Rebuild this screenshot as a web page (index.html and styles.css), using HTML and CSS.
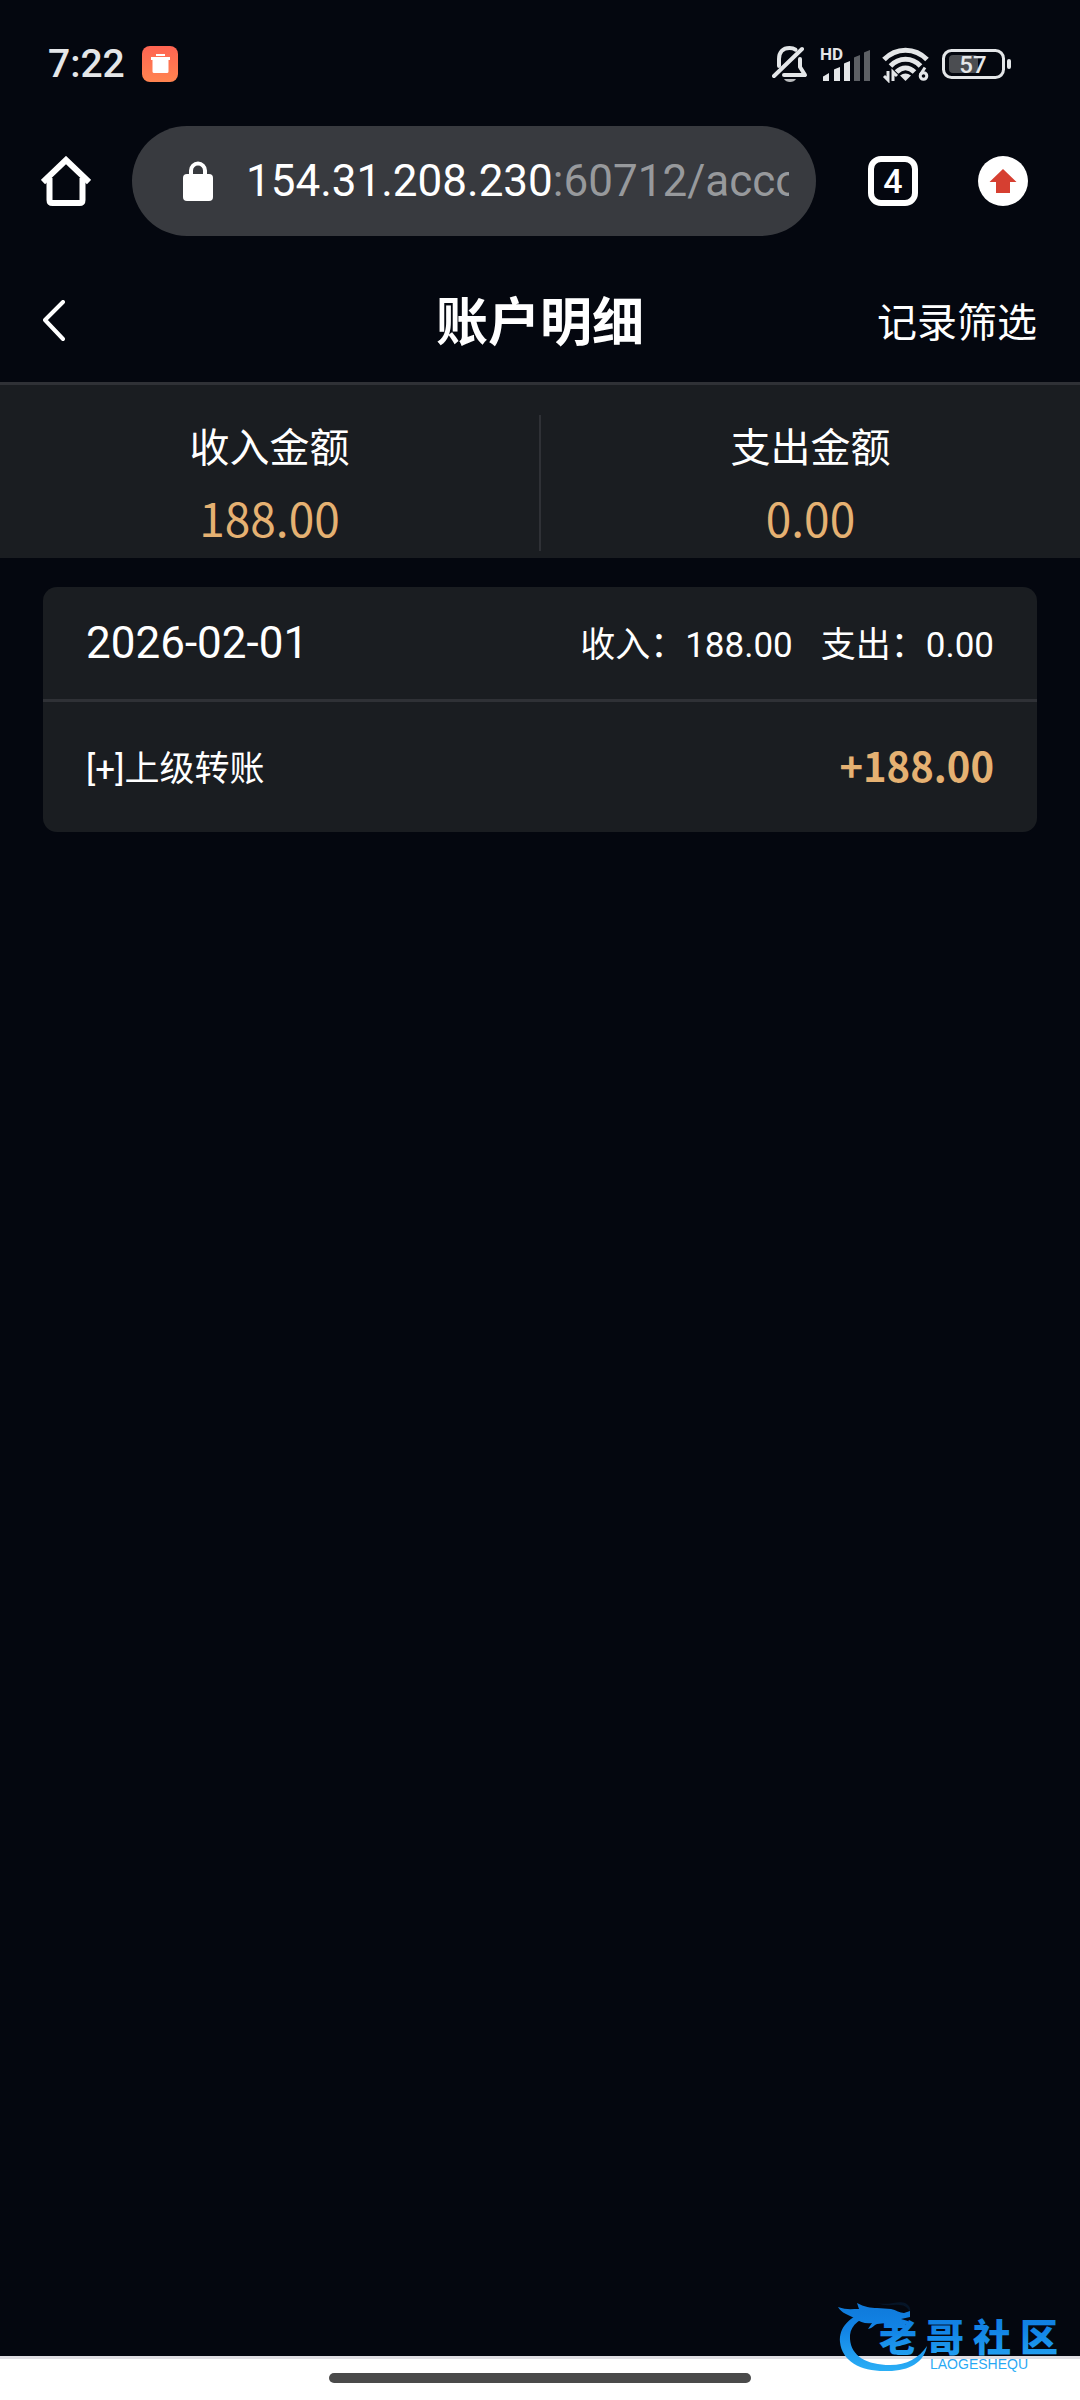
FILE: index.html
```
<!DOCTYPE html>
<html lang="zh-CN">
<head>
    <meta charset="UTF-8">
    <meta name="viewport" content="width=device-width, initial-scale=1">
    <title>账户明细</title>
    <link rel="stylesheet" href="styles.css">
</head>
<body>
    <div class="status">
        <span class="time">7:22</span>
        <svg class="app" width="36" height="36" viewBox="0 0 36 36">
            <defs>
                <linearGradient id="appbg" x1="0" y1="0" x2="0" y2="1">
                    <stop offset="0" stop-color="#ff6452"/>
                    <stop offset="1" stop-color="#ff8450"/>
                </linearGradient>
            </defs>
            <rect width="36" height="36" rx="8" fill="url(#appbg)"/>
            <path d="M14 8h9v2h-9zM9 11h19v3h-1.500v11.500a1.500 1.500 0 0 1-1.500 1.500h-13a1.500 1.500 0 0 1-1.500-1.500v-11.500h-1.500z" fill="#fff"/>
        </svg>
        <div class="signs">
            <svg width="36" height="38" viewBox="0 0 36 38" fill="none" stroke="#e4e6e8" stroke-width="4" stroke-linecap="round" stroke-linejoin="round">
                <path d="M7 21V14C7 7 11 3 17.500 3c2.500 0 4.500.6 6 1.700M28 14v8l5 8H12"/>
                <path d="M2 31L30 4"/>
                <path d="M12 34h12c-2 4-10 4-12 0z" fill="#b9bbbd" stroke="none"/>
            </svg>
            <svg width="50" height="38" viewBox="0 0 50 38">
                <text class="hd" x="0" y="15">HD</text>
                <g fill="#e4e6e8">
                    <path d="M3 36v-4q0-1 1-1l5-3v8zM14 36V25q0-1 1-1l5-2v14zM24 36V19q0-1 1-1l5-2v20z"/>
                    <path d="M34 36V13q0-1 1-1l5-2v26zM44 36V8q0-1 1-1l5-2v31z" fill="#5d6065"/>
                </g>
            </svg>
            <svg width="48" height="38" viewBox="0 0 48 38" fill="none" stroke="#e4e6e8" stroke-width="5">
                <path d="M2 14.500C14 2 33 2 45 14.500M8.500 21C17 12 30 12 38.500 21M14.500 27C20 21.500 27 21.500 32.500 27"/>
                <path d="M18 30.500q5.500-4 11 0l-5.500 5.500z" fill="#e4e6e8" stroke="none"/>
                <path d="M6 26v9l-4-4M11 36v-9l4 4" stroke-width="3"/>
                <circle cx="41.500" cy="31" r="3.300" stroke-width="3"/>
                <path d="M38.500 29.500L43 22.500" stroke-width="3"/>
            </svg>
            <svg width="70" height="32" viewBox="0 0 70 32">
                <rect x="7" y="7" width="29" height="18" rx="4" fill="#4b4d51"/>
                <rect x="1.500" y="2.500" width="60" height="27" rx="8" fill="none" stroke="#e4e6e8" stroke-width="3"/>
                <rect x="65" y="11" width="4" height="10" rx="2" fill="#e4e6e8"/>
                <text class="power" x="31" y="25" text-anchor="middle">57</text>
            </svg>
        </div>
    </div>
    <div class="browser">
        <button class="home" aria-label="主页">
            <svg width="50" height="50" viewBox="0 0 50 50" fill="none" stroke="#fff" stroke-width="6">
                <path d="M8.500 22v22q0 3 3 3h27q3 0 3-3v-22" />
                <path d="M2 26L25 4l23 22"/>
            </svg>
        </button>
        <button class="address">
            <svg width="30" height="40" viewBox="0 0 30 40">
                <path d="M8 15V9.500a7 7 0 0 1 14 0V15" fill="none" stroke="#fff" stroke-width="4"/>
                <rect y="13" width="30" height="27" rx="4" fill="#fff"/>
            </svg>
            <span class="url">154.31.208.230<span class="path">:60712/account</span></span>
        </button>
        <button class="tabs">4</button>
        <button class="update" aria-label="更新">
            <svg width="50" height="50" viewBox="0 0 50 50">
                <circle cx="25" cy="25" r="25" fill="#fff"/>
                <path d="M25 13l13.500 13H32v11H18V26h-6.500z" fill="#d63f31"/>
            </svg>
        </button>
    </div>
    <header class="head">
        <a class="back" href="#" aria-label="返回">
            <svg width="22" height="42" viewBox="0 0 22 42" fill="none" stroke="#fff" stroke-width="4" stroke-linecap="round" stroke-linejoin="round">
                <path d="M20 2L2 20l18 19"/>
            </svg>
        </a>
        <h1>账户明细</h1>
        <a class="filter" href="#">记录筛选</a>
    </header>
    <main>
        <dl class="total">
            <div>
                <dt>收入金额</dt>
                <dd>188.00</dd>
            </div>
            <div>
                <dt>支出金额</dt>
                <dd>0.00</dd>
            </div>
        </dl>
        <section class="day">
            <div class="day-head">
                <h2>2026-02-01</h2>
                <p><span>收入：188.00</span><span>支出：0.00</span></p>
            </div>
            <div class="day-row">
                <span>[+]上级转账</span>
                <strong>+188.00</strong>
            </div>
        </section>
    </main>
    <footer class="nav">
        <div class="handle"></div>
        <svg class="logo" width="226" height="76" viewBox="0 0 226 76">
            <defs>
                <linearGradient id="blue" gradientUnits="userSpaceOnUse" x1="0" y1="0" x2="0" y2="76">
                    <stop offset="0" stop-color="#0f78d8"/>
                    <stop offset=".4" stop-color="#1284e6"/>
                    <stop offset="1" stop-color="#2db4f8"/>
                </linearGradient>
            </defs>
            <g fill="url(#blue)">
                <path d="M31 10C10 17 1 28 2 42c2 20 22 30 48 29 22 0 36-9 39-25-8 12-20 19-37 19-23 0-39-9-40-26-1-11 6-19 21-24z"/>
                <path d="M0 7c8 3 13 2 21 2l-2-6c7 4 14 5 20 5l14 1c5 1 9 4 13 4l6-2v6l-9 2 7 2v4l-14-2c-4 1-6 3-10 3l2-3-9 1c-3 1-4 4-9 5l4-6c-7 1-12-1-16-4C11 15 3 13 0 7z"/>
                <path d="M39 3c12 3 22-3 28 0 4 2 6 5 5 9-2-4-5-7-10-7-8-1-13 2-23-2z" opacity=".12"/>
                <text class="logo-name" x="41 88 135 182" y="51">老哥社区</text>
                <text class="logo-sub" x="92" y="69">LAOGESHEQU</text>
            </g>
        </svg>
    </footer>
</body>
</html>
```
FILE: styles.css
```
*{margin:0;padding:0;box-sizing:border-box;}
body{
    min-height: 100vh;
    display: flex;
    flex-direction: column;
    background-color: #04070f;
    color: #fff;
    font-family: Roboto, "Noto Sans CJK SC", sans-serif;
}
svg{
    display: block;
    flex: none;
}
a{
    color: inherit;
    text-decoration: none;
}
button{
    border: 0;
    background: none;
    color: inherit;
    font: inherit;
    cursor: pointer;
}
/* 状态栏 */
.status{
    display: flex;
    align-items: center;
    padding: 46px 68px 0 48px;
    height: 82px;
}
.time{
    font-size: 39px;
    line-height: 48px;
    font-weight: 500;
    color: #e4e6e8;
}
.app{
    margin-left: 17px;
}
.signs{
    margin-left: auto;
    display: flex;
    align-items: center;
    gap: 12px;
}
.hd{
    font-size: 17px;
    font-weight: 700;
    fill: #e4e6e8;
}
.power{
    font-size: 24px;
    font-weight: 500;
    fill: #e4e6e8;
}
/* 浏览器地址栏 */
.browser{
    display: flex;
    align-items: center;
    padding: 44px 52px 24px 41px;
}
.address{
    flex: 1;
    min-width: 0;
    height: 110px;
    margin: 0 52px 0 41px;
    padding: 0 27px 0 51px;
    border-radius: 55px;
    background-color: #383a3f;
    display: flex;
    align-items: center;
    gap: 33px;
}
.url{
    flex: 1;
    min-width: 0;
    overflow: hidden;
    white-space: nowrap;
    text-align: left;
    font-size: 44px;
    line-height: 60px;
}
.path{
    color: #97999c;
}
.tabs{
    width: 50px;
    height: 50px;
    margin-right: 60px;
    border: 6px solid #fff;
    border-radius: 13px;
    font-size: 34px;
    line-height: 38px;
    font-weight: 500;
}
/* 页头 */
.head{
    display: grid;
    grid-template-columns: 1fr auto 1fr;
    align-items: center;
    height: 125px;
    padding: 0 43px;
    border-bottom: 3px solid #2f3136;
}
.back{
    justify-self: start;
}
.head h1{
    padding-top: 6px;
    font-size: 52px;
    line-height: 72px;
    font-weight: 700;
}
.filter{
    justify-self: end;
    padding-top: 6px;
    font-size: 40px;
    line-height: 60px;
}
main{
    flex: 1;
}
/* 收支合计 */
.total{
    display: flex;
    padding: 30px 0 7px;
    background-color: #1a1d21;
    text-align: center;
    font-family: "Noto Sans CJK SC", sans-serif;
}
.total div{
    flex: 1;
}
.total div + div{
    border-left: 2px solid #2f3136;
}
.total dt{
    font-size: 40px;
    line-height: 60px;
}
.total dd{
    margin-top: 8px;
    font-size: 46px;
    line-height: 68px;
    color: #e5b172;
}
/* 每日明细 */
.day{
    margin: 29px 43px;
    border-radius: 14px;
    background-color: #1a1d21;
}
.day-head,
.day-row{
    display: flex;
    align-items: center;
    justify-content: space-between;
    padding: 0 43px;
    font-size: 35px;
}
.day-head{
    height: 115px;
    border-bottom: 3px solid #2f3136;
}
.day-head h2{
    font-size: 44px;
    font-weight: 400;
}
.day-head p{
    display: flex;
    gap: 28px;
    padding-bottom: 4px;
}
.day-row{
    height: 130px;
    padding-bottom: 4px;
}
.day-row strong{
    font-family: "Noto Sans CJK SC", sans-serif;
    font-size: 40px;
    font-weight: 700;
    color: #e5b172;
}
/* 底部手势条 */
.nav{
    position: relative;
    height: 44px;
    padding-top: 14px;
    border-top: 3px solid #dfdee3;
    background-color: #fff;
}
.handle{
    width: 39%;
    height: 10px;
    margin: 0 auto;
    border-radius: 5px;
    background-color: #4a4a4a;
}
.logo{
    position: absolute;
    right: 16px;
    bottom: 24px;
}
.logo-name{
    font-family: "Noto Sans CJK SC", sans-serif;
    font-size: 38px;
    font-weight: 900;
}
.logo-sub{
    font-family: "Liberation Sans", sans-serif;
    font-size: 14px;
}
```
